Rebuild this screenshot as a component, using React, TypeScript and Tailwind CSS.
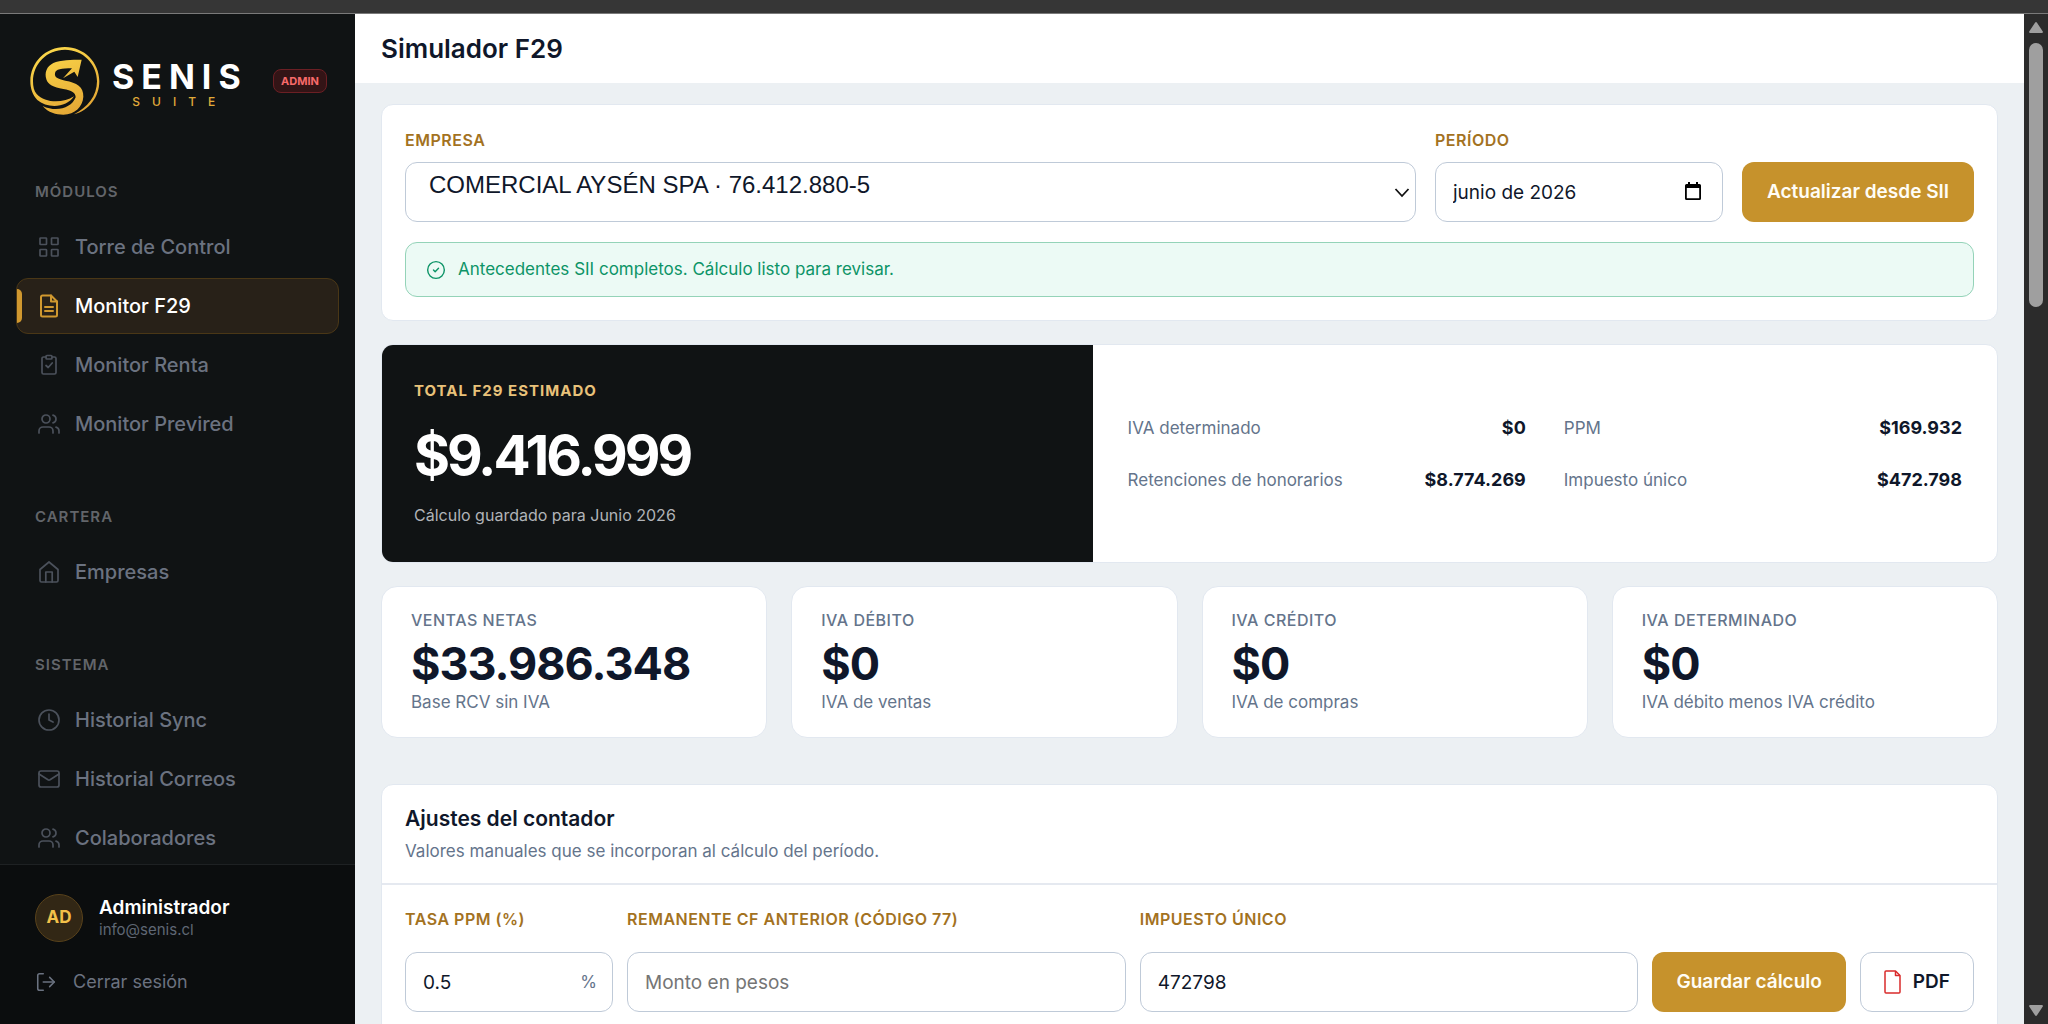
import { useState, type ReactNode } from "react";
import { CircleCheck, Clock, LogOut, Mail, Users } from "lucide-react";

const iconProps = {
  viewBox: "0 0 24 24",
  fill: "none",
  stroke: "currentColor",
  strokeWidth: 1.7,
  strokeLinecap: "round",
  strokeLinejoin: "round",
} as const;

const GridIcon = () => (
  <svg {...iconProps} className="size-6">
    <rect x="3" y="3" width="6.500" height="6.500" rx="0.6" />
    <rect x="14.500" y="3" width="6.500" height="6.500" rx="0.6" />
    <rect x="3" y="14.500" width="6.500" height="6.500" rx="0.6" />
    <rect x="14.500" y="14.500" width="6.500" height="6.500" rx="0.6" />
  </svg>
);

const DocumentIcon = () => (
  <svg {...iconProps} strokeWidth={2} className="size-6">
    <path d="M14 1.500H5.500A1.500 1.500 0 0 0 4 3v18a1.500 1.500 0 0 0 1.500 1.500h13A1.500 1.500 0 0 0 20 21V7.500z" />
    <path d="M14 1.500v6h6M8 13h8M8 17h8" />
  </svg>
);

const ClipboardIcon = () => (
  <svg {...iconProps} className="size-6">
    <path d="M9 4H6.500A1.500 1.500 0 0 0 5 5.500v14A1.500 1.500 0 0 0 6.500 21h11a1.500 1.500 0 0 0 1.500-1.500v-14A1.500 1.500 0 0 0 17.500 4H15" />
    <rect x="9" y="2.500" width="6" height="3.500" rx="1" />
    <path d="M9 12.500l2.200 2 4-4.500" />
  </svg>
);

const HomeIcon = () => (
  <svg {...iconProps} className="size-6">
    <path d="M3 9.500 12 2l9 7.500V20.500a1.500 1.500 0 0 1-1.500 1.500h-15A1.500 1.500 0 0 1 3 20.500z" />
    <path d="M8.800 22V12h6.400v10" />
  </svg>
);

const ClockIcon = () => <Clock className="size-6" strokeWidth={1.7} />;
const MailIcon = () => <Mail className="size-6" strokeWidth={1.7} />;
const UsersIcon = () => <Users className="size-6" strokeWidth={1.7} />;

type NavItem = { label: string; icon: () => ReactNode; active?: boolean };

const sections: { title: string; items: NavItem[] }[] = [
  {
    title: "MÓDULOS",
    items: [
      { label: "Torre de Control", icon: GridIcon },
      { label: "Monitor F29", icon: DocumentIcon, active: true },
      { label: "Monitor Renta", icon: ClipboardIcon },
      { label: "Monitor Previred", icon: UsersIcon },
    ],
  },
  { title: "CARTERA", items: [{ label: "Empresas", icon: HomeIcon }] },
  {
    title: "SISTEMA",
    items: [
      { label: "Historial Sync", icon: ClockIcon },
      { label: "Historial Correos", icon: MailIcon },
      { label: "Colaboradores", icon: UsersIcon },
    ],
  },
];

const breakdown = [
  { label: "IVA determinado", value: "$0" },
  { label: "PPM", value: "$169.932" },
  { label: "Retenciones de honorarios", value: "$8.774.269" },
  { label: "Impuesto único", value: "$472.798" },
];

const stats = [
  { label: "VENTAS NETAS", value: "$33.986.348", hint: "Base RCV sin IVA" },
  { label: "IVA DÉBITO", value: "$0", hint: "IVA de ventas" },
  { label: "IVA CRÉDITO", value: "$0", hint: "IVA de compras" },
  {
    label: "IVA DETERMINADO",
    value: "$0",
    hint: "IVA débito menos IVA crédito",
  },
];

const Logo = () => (
  <div className="flex items-center gap-3">
    <svg viewBox="90 140 210 210" className="size-[70px]" aria-hidden="true">
      <defs>
        <linearGradient
          id="gold"
          gradientUnits="userSpaceOnUse"
          x1="150"
          y1="143"
          x2="240"
          y2="346"
        >
          <stop offset="0" stopColor="#fbd84a" />
          <stop offset="1" stopColor="#e3a534" />
        </linearGradient>
      </defs>
      <path
        fill="url(#gold)"
        d="M222 291C200 326 142 328 112 302C98 287 91 268 91 246C91 189 137 143 195 143C252 143 298 189 298 246C298 292 268 334 222 345C262 325 291 290 291 246C291 193 248 151 195 151C141 151 99 193 99 246C99 262 102 275 110 284C135 312 190 312 222 291Z"
      />
      <path
        fill="url(#gold)"
        d="M245 181C215 181 180 182 160 191C140 201 133 220 139 240C144 256 160 264 190 269C215 273 227 280 227 294C215 326 170 340 128 320C145 340 168 346 190 346C225 345 248 322 250 292C251 262 230 250 196 244C172 239 163 234 165 222C167 209 184 207 216 207L189 237L223 217L233 233Z"
      />
    </svg>
    <div className="flex flex-col items-center gap-px pt-2">
      <span className="text-[34px] leading-8 font-bold tracking-[7px] text-white">
        SENIS
      </span>
      <span className="text-[12px] leading-4 font-medium tracking-[12px] text-[#e0ab3a]">
        SUITE
      </span>
    </div>
  </div>
);

const SidebarLink = ({ label, icon: Icon, active }: NavItem) => (
  <a
    href="#"
    className={`relative flex h-14 items-center gap-3.5 rounded-xl border px-5 text-[20px] font-medium ${
      active
        ? "border-[#4a3716] bg-[#282118] text-white"
        : "border-transparent text-[#6b7280]"
    }`}
  >
    {active && (
      <span className="absolute top-2.5 left-0 h-[34px] w-[5px] rounded-r-md bg-[#d0982f]" />
    )}
    <span className={active ? "text-[#d0982f]" : "text-[#4b515b]"}>
      <Icon />
    </span>
    {label}
  </a>
);

const Sidebar = () => (
  <aside className="flex w-[355px] shrink-0 flex-col bg-[#101314]">
    <div className="flex shrink-0 items-center justify-between py-8 pr-7 pl-[30px]">
      <Logo />
      <span className="rounded-lg border border-[#6b1f24] bg-[#331416] px-[7px] text-[11px] leading-[22px] font-bold text-[#f86a6a]">
        ADMIN
      </span>
    </div>
    <nav className="flex min-h-0 flex-1 flex-col gap-[55px] overflow-hidden px-4 pt-[34px]">
      {sections.map((section) => (
        <div key={section.title}>
          <h2 className="px-[19px] text-[15px] leading-5 font-semibold tracking-[1px] text-[#62656a]">
            {section.title}
          </h2>
          <div className="mt-[17px] flex flex-col gap-[3px]">
            {section.items.map((item) => (
              <SidebarLink key={item.label} {...item} />
            ))}
          </div>
        </div>
      ))}
    </nav>
    <div className="shrink-0 border-t border-[#1e2123] bg-[#0b0d0e] px-[35px] pt-[29px] pb-7">
      <div className="flex items-center gap-4">
        <span className="flex size-12 items-center justify-center rounded-full border border-[#59421b] bg-[#322715] text-[17px] font-bold text-[#f2c14a]">
          AD
        </span>
        <div>
          <p className="text-[19px] leading-6 font-semibold text-white">
            Administrador
          </p>
          <p className="text-[15px] leading-5 text-[#5f6774]">info@senis.cl</p>
        </div>
      </div>
      <button
        type="button"
        className="mt-[26px] flex items-center gap-4 text-[18px] leading-7 text-[#6b7280]"
      >
        <LogOut className="size-[22px]" strokeWidth={1.7} />
        Cerrar sesión
      </button>
    </div>
  </aside>
);

const Card = ({
  children,
  className = "",
}: {
  children: ReactNode;
  className?: string;
}) => (
  <section
    className={`shrink-0 border border-[#e2e8f0] bg-white ${className}`}
  >
    {children}
  </section>
);

const FieldLabel = ({ id, children }: { id: string; children: ReactNode }) => (
  <label
    htmlFor={id}
    className="block text-[16px] leading-5 font-semibold tracking-[0.5px] text-[#a3721f]"
  >
    {children}
  </label>
);

const inputClass =
  "h-[60px] w-full rounded-xl border border-[#bfcad8] bg-white px-[17px] text-[19px] text-[#0f172a] placeholder:text-[#757575]";

const goldButton =
  "h-[60px] shrink-0 rounded-xl bg-[#c6922c] px-6 text-[19px] font-semibold whitespace-nowrap text-[#fffdf5]";

const FilterCard = () => (
  <Card className="rounded-xl px-[23px] pt-[25px] pb-[23px]">
    <div className="flex items-end gap-[19px]">
      <div className="min-w-0 flex-1">
        <FieldLabel id="empresa">EMPRESA</FieldLabel>
        <div className="relative mt-3">
          <select
            id="empresa"
            className="h-[60px] w-full appearance-none rounded-xl border border-[#bfcad8] bg-white px-[23px] pb-3.5 font-['Liberation_Sans',sans-serif] text-[24px] text-[#0f172a]"
          >
            <option>COMERCIAL AYSÉN SPA · 76.412.880-5</option>
          </select>
          <svg
            viewBox="0 0 16 10"
            className="pointer-events-none absolute top-[26px] right-1.5 h-2.5 w-4"
            fill="none"
            stroke="#111"
            strokeWidth="1.8"
          >
            <path d="M1.500 1l6.500 7 6.500-7" />
          </svg>
        </div>
      </div>
      <div className="w-72">
        <FieldLabel id="periodo">PERÍODO</FieldLabel>
        <div className="relative mt-3">
          <input
            id="periodo"
            className={inputClass}
            defaultValue="junio de 2026"
          />
          <svg
            viewBox="0 0 16 18"
            className="pointer-events-none absolute top-5 right-[22px] h-[18px] w-4"
          >
            <path
              fill="#000"
              fillRule="evenodd"
              d="M3 0h2v2h6V0h2v2h1.500a1.500 1.500 0 0 1 1.500 1.500v13a1.500 1.500 0 0 1-1.500 1.500h-13a1.500 1.500 0 0 1-1.500-1.500v-13A1.500 1.500 0 0 1 1.500 2H3zM1.800 6v10.200h12.400V6z"
            />
          </svg>
        </div>
      </div>
      <button type="button" className={`min-w-[232px] ${goldButton}`}>
        Actualizar desde SII
      </button>
    </div>
    <div className="mt-5 flex h-[55px] items-center gap-3 rounded-xl border border-[#94d3b8] bg-[#ecfaf5] px-5 text-[17px] text-[#0d9467]">
      <CircleCheck className="size-5" strokeWidth={1.7} />
      Antecedentes SII completos. Cálculo listo para revisar.
    </div>
  </Card>
);

const TotalCard = () => (
  <Card className="grid grid-cols-[11fr_14fr] overflow-hidden rounded-xl">
    <div className="bg-[#101314] px-8 pt-9 pb-[35px]">
      <h2 className="text-[15px] leading-5 font-bold tracking-[1px] text-[#e9c27a]">
        TOTAL F29 ESTIMADO
      </h2>
      <p className="mt-[22px] text-[55px] leading-[64px] font-bold tracking-[-3px] text-white">
        $9.416.999
      </p>
      <p className="mt-4 text-[16px] leading-6 text-[#b0b3b8]">
        Cálculo guardado para Junio 2026
      </p>
    </div>
    <dl className="grid grid-cols-2 content-center gap-x-[38px] gap-y-7 px-[35px]">
      {breakdown.map((row) => (
        <div
          key={row.label}
          className="flex items-center justify-between leading-6"
        >
          <dt className="text-[17px] text-[#64748b]">{row.label}</dt>
          <dd className="text-[18px] font-bold text-[#0f172a]">{row.value}</dd>
        </div>
      ))}
    </dl>
  </Card>
);

const StatGrid = () => (
  <div className="grid shrink-0 grid-cols-4 gap-6">
    {stats.map((stat) => (
      <Card key={stat.label} className="rounded-2xl px-[29px] py-[23px]">
        <h3 className="text-[16px] leading-5 font-medium tracking-[0.5px] text-[#64748b]">
          {stat.label}
        </h3>
        <p className="mt-2 text-[45px] leading-[52px] font-bold tracking-[-1px] text-[#0f172a]">
          {stat.value}
        </p>
        <p className="text-[17px] leading-6 text-[#64748b]">{stat.hint}</p>
      </Card>
    ))}
  </div>
);

const AdjustmentsCard = () => {
  const [rate, setRate] = useState("0.5");
  const [remainder, setRemainder] = useState("");
  const [tax, setTax] = useState("472798");

  return (
    <Card className="mt-[23px] rounded-xl">
      <header className="border-b-2 border-[#e5e9f0] px-[23px] py-5">
        <h2 className="text-[21px] leading-7 font-semibold text-[#0f172a]">
          Ajustes del contador
        </h2>
        <p className="mt-1.5 text-[17px] leading-6 text-[#64748b]">
          Valores manuales que se incorporan al cálculo del período.
        </p>
      </header>
      <form className="flex items-end gap-3.5 px-[23px] pt-6 pb-8">
        <div className="w-[208px]">
          <FieldLabel id="tasa">TASA PPM (%)</FieldLabel>
          <div className="relative mt-[23px]">
            <input
              id="tasa"
              className={inputClass}
              value={rate}
              onChange={(e) => setRate(e.target.value)}
            />
            <span className="absolute top-4 right-4 text-[17px] leading-7 text-[#64748b]">
              %
            </span>
          </div>
        </div>
        <div className="min-w-0 flex-1">
          <FieldLabel id="remanente">
            REMANENTE CF ANTERIOR (CÓDIGO 77)
          </FieldLabel>
          <input
            id="remanente"
            className={`mt-[23px] ${inputClass}`}
            placeholder="Monto en pesos"
            value={remainder}
            onChange={(e) => setRemainder(e.target.value)}
          />
        </div>
        <div className="min-w-0 flex-1">
          <FieldLabel id="impuesto">IMPUESTO ÚNICO</FieldLabel>
          <input
            id="impuesto"
            className={`mt-[23px] ${inputClass}`}
            value={tax}
            onChange={(e) => setTax(e.target.value)}
          />
        </div>
        <button type="button" className={goldButton}>
          Guardar cálculo
        </button>
        <button
          type="button"
          className="flex h-[60px] shrink-0 items-center gap-3 rounded-xl border border-[#bfcad8] bg-white px-[23px] text-[19px] font-semibold text-[#0f172a]"
        >
          <svg
            viewBox="0 0 17 24"
            className="h-6 w-[17px]"
            fill="none"
            stroke="#d92b2b"
            strokeWidth="1.5"
            strokeLinejoin="round"
          >
            <path d="M11.500 1H2a1 1 0 0 0-1 1v20a1 1 0 0 0 1 1h13a1 1 0 0 0 1-1V5.500z" />
            <path d="M11.500 1v4.500H16" />
          </svg>
          PDF
        </button>
      </form>
    </Card>
  );
};

const Scrollbar = () => (
  <div
    className="flex w-6 shrink-0 flex-col items-center bg-[#2b2b2b] py-2"
    aria-hidden="true"
  >
    <svg viewBox="0 0 14 11" className="h-[11px] w-3.5" fill="#9f9f9f">
      <path d="M6 .8a1.200 1.200 0 0 1 2 0l5.800 8.700a1 1 0 0 1-.9 1.500H1.100a1 1 0 0 1-.9-1.500z" />
    </svg>
    <div className="mt-2.5 h-66 w-3.5 rounded-full bg-[#9f9f9f]" />
    <svg viewBox="0 0 14 11" className="mt-auto h-[11px] w-3.5" fill="#9f9f9f">
      <path d="M6 10.200a1.200 1.200 0 0 0 2 0l5.800-8.700A1 1 0 0 0 12.900 0H1.100a1 1 0 0 0-.9 1.500z" />
    </svg>
  </div>
);

export default function App() {
  return (
    <div className="flex h-screen flex-col overflow-hidden font-[Inter,sans-serif]">
      <div className="h-3.5 shrink-0 border-b border-[#7a7a7a] bg-[#363636]" />
      <div className="flex min-h-0 flex-1">
        <Sidebar />
        <main className="flex min-w-0 flex-1 flex-col bg-[#ecf0f3]">
          <header className="shrink-0 bg-white px-[26px] pt-[17px] pb-4">
            <h1 className="text-[26px] leading-9 font-semibold text-[#0f172a]">
              Simulador F29
            </h1>
          </header>
          <div className="flex min-h-0 flex-1 flex-col gap-[23px] overflow-hidden px-[26px] pt-[21px]">
            <FilterCard />
            <TotalCard />
            <StatGrid />
            <AdjustmentsCard />
          </div>
        </main>
        <Scrollbar />
      </div>
    </div>
  );
}
